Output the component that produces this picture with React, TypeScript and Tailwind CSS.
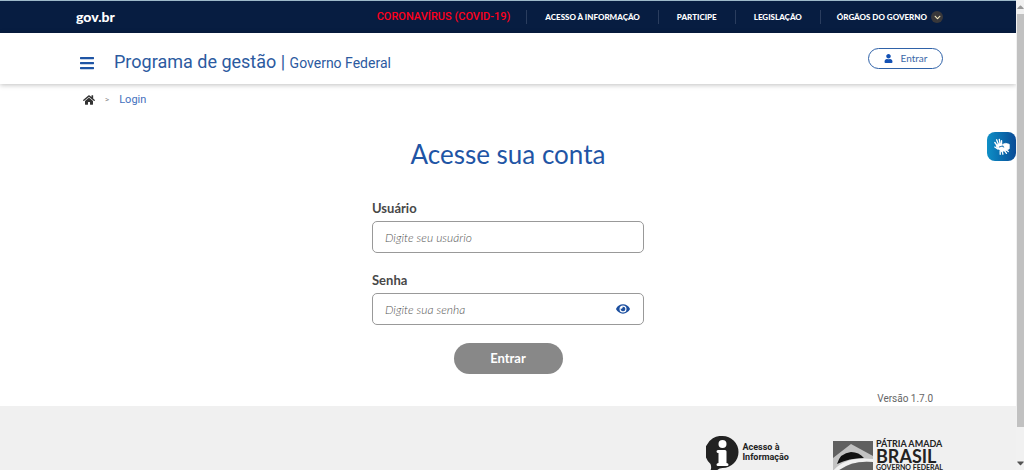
import { useState } from "react";
import {
  FaBars,
  FaCaretDown,
  FaCaretUp,
  FaChevronDown,
  FaEye,
  FaHome,
  FaUser,
} from "react-icons/fa";
import clsx from "clsx";

const NAV_LINKS = ["Acesso à informação", "Participe", "Legislação"];

function GovBar() {
  return (
    <div className="flex h-[33px] shrink-0 items-center justify-between border-t border-[#9db9c9] bg-[#071d41] pr-[73px] pl-[76px] text-white">
      <a href="#" className="text-[14px] leading-4 font-black">
        gov.br
      </a>
      <nav className="flex items-center text-[8px] leading-[14px] font-black uppercase">
        <a
          href="#"
          className="pr-4 font-[Roboto,sans-serif] text-[11px] font-medium text-[#ff001c]"
        >
          Coronavírus (COVID-19)
        </a>
        {NAV_LINKS.map((label) => (
          <a
            key={label}
            href="#"
            className="border-l border-[#2a3d5e] px-[18px]"
          >
            {label}
          </a>
        ))}
        <button
          type="button"
          className="flex items-center gap-1 border-l border-[#2a3d5e] pl-4 uppercase"
        >
          Órgãos do governo
          <span className="flex h-3 w-3 items-center justify-center rounded-full bg-[#39383a]">
            <FaChevronDown className="h-[7px] w-[7px] text-[#f3e9c0]" />
          </span>
        </button>
      </nav>
    </div>
  );
}

function Header() {
  return (
    <header className="relative flex h-[51px] shrink-0 items-center justify-between bg-white pr-[73px] pl-20 shadow-[0_1px_5px_rgba(0,0,0,0.25)]">
      <div className="flex items-center gap-5 pt-2">
        <button type="button" aria-label="Menu" className="text-[#1f55a5]">
          <FaBars className="h-4 w-[14px]" />
        </button>
        <h1 className="font-[Roboto,sans-serif] text-[18px] leading-6 text-[#2c5aa0]">
          Programa de gestão |{" "}
          <span className="text-[14px]">Governo Federal</span>
        </h1>
      </div>
      <button
        type="button"
        className="flex h-[21px] w-[75px] items-center justify-center gap-2 rounded-full border border-[#2f62a8] text-[10px] text-[#3b68a8]"
      >
        <FaUser className="h-[9px] w-[9px] text-[#1351b4]" />
        Entrar
      </button>
    </header>
  );
}

function Breadcrumb() {
  return (
    <nav className="flex h-[31px] shrink-0 items-center gap-[10px] pl-[83px] font-[Roboto,sans-serif] text-[11px] leading-4">
      <a href="#" aria-label="Início" className="text-[#333]">
        <FaHome className="h-3 w-3" />
      </a>
      <span className="text-[8px] text-[#888]">&gt;</span>
      <a href="#" className="text-[#4470bd]">
        Login
      </a>
    </nav>
  );
}

const inputClass =
  "h-8 w-full rounded-[5px] border border-[#999] bg-white px-3 text-[12px] text-[#333] placeholder:font-light placeholder:text-[#555] placeholder:italic focus:outline-none";

function LoginForm() {
  const [showPassword, setShowPassword] = useState(false);

  return (
    <form
      className="mx-auto flex w-[272px] flex-col"
      onSubmit={(e) => e.preventDefault()}
    >
      <h2 className="mt-[23px] self-center text-[26px] leading-8 text-[#1f55a5]">
        Acesse sua conta
      </h2>
      <label
        htmlFor="user"
        className="mt-[30px] mb-[5px] text-[13px] leading-4 font-bold text-[#484848]"
      >
        Usuário
      </label>
      <input
        id="user"
        type="text"
        placeholder="Digite seu usuário"
        className={inputClass}
      />
      <label
        htmlFor="password"
        className="mt-[19px] mb-[5px] text-[13px] leading-4 font-bold text-[#484848]"
      >
        Senha
      </label>
      <div className="relative">
        <input
          id="password"
          type={showPassword ? "text" : "password"}
          placeholder="Digite sua senha"
          className={clsx(inputClass, "pr-10")}
        />
        <button
          type="button"
          aria-label="Mostrar senha"
          onClick={() => setShowPassword(!showPassword)}
          className="absolute inset-y-0 right-[14px] flex items-center text-[#1c4f9f]"
        >
          <FaEye className="h-[14px] w-[14px]" />
        </button>
      </div>
      <button
        type="submit"
        className="mt-[18px] h-[31px] w-[109px] self-center rounded-full bg-[#888] text-[13px] font-bold text-white"
      >
        Entrar
      </button>
    </form>
  );
}

function InfoIcon() {
  return (
    <svg viewBox="0 0 33 38" className="h-[38px] w-[33px] shrink-0">
      <path
        d="M16.500 0a16 16 0 0 1 0 32q-4 0-6 3-3 3-8 2 4-4 2-9A16 16 0 0 1 16.500 0z"
        fill="#222"
      />
      <circle cx="16.500" cy="8" r="4" fill="#fff" />
      <path
        d="M12 14h7q1.500 0 1.500 1.500V27q2 0 2 1.500T21 30h-9q-1.500 0-1.500-1.500T12.500 27V17q-2 0-2-1.500T12 14z"
        fill="#fff"
      />
    </svg>
  );
}

function FlagIcon() {
  return (
    <svg viewBox="0 0 40 30" className="mt-px h-[30px] w-10 shrink-0">
      <path d="M0 0h40v30H0z" fill="#606060" />
      <path d="M0 17L18 3l22 12v15H0z" fill="#c2c2c2" />
      <path d="M4 23q3-11 14-12 8 0 13 6-15 0-27 6z" fill="#111" />
      <path d="M0 30q12-15 40-12v3Q18 19 5 30z" fill="#f0f0f0" />
      <path d="M5 30q14-11 35-9v9z" fill="#606060" />
    </svg>
  );
}

function HandsIcon() {
  return (
    <svg
      viewBox="0 0 20 20"
      className="h-[18px] w-[18px]"
      fill="none"
      stroke="currentColor"
      strokeLinecap="round"
      strokeLinejoin="round"
    >
      <path
        d="M5 9L2 5M6 7L4 2M8 7L7 1.500M9.500 8V3M5 12L2 10M13 12l4 3M12 13l3 4M10 14l1 4M8 14v4"
        strokeWidth="1.500"
      />
      <path d="M4 8l4-2 2 2 1 3-3 2-3-1z" fill="currentColor" />
      <path
        d="M11 7l3-1 4 1v5l-4 2-5 1-1-2 4-3z"
        fill="currentColor"
      />
      <path d="M7 10l3-1 2 1" stroke="#0b66aa" />
    </svg>
  );
}

function Footer() {
  return (
    <footer className="flex flex-1 items-start justify-end gap-11 bg-[#f0f0f0] pt-[30px] pr-[73px]">
      <a href="#" className="flex items-start gap-[3px] text-[#222]">
        <InfoIcon />
        <span className="pt-[6px] font-[Roboto,sans-serif] text-[9px] leading-[10px] font-bold">
          Acesso à
          <br />
          Informação
        </span>
      </a>
      <a href="#" className="flex items-start gap-[3px] pt-1 text-[#222]">
        <FlagIcon />
        <span className="flex flex-col">
          <span className="text-[9px] leading-[8px] font-bold">
            PÁTRIA AMADA
          </span>
          <span className="text-[18px] leading-4 font-bold">BRASIL</span>
          <span className="text-[7px] leading-[6px] font-bold">
            GOVERNO FEDERAL
          </span>
        </span>
      </a>
    </footer>
  );
}

export default function App() {
  return (
    <div className="flex h-screen overflow-hidden bg-white font-[Lato,sans-serif]">
      <div className="relative flex min-w-0 flex-1 flex-col overflow-hidden">
        <GovBar />
        <Header />
        <Breadcrumb />
        <main className="shrink-0">
          <LoginForm />
          <p className="mt-[17px] pr-[83px] text-right font-[Roboto,sans-serif] text-[10px] leading-[15px] text-[#666]">
            Versão 1.7.0
          </p>
        </main>
        <Footer />
        <button
          type="button"
          aria-label="Libras"
          className="absolute top-[132px] right-0 flex h-[29px] w-[29px] items-center justify-center rounded-lg bg-linear-to-r from-[#0f8fc6] to-[#0b4b96] text-white"
        >
          <HandsIcon />
        </button>
      </div>
      {/* Scroll track */}
      <div className="flex w-2 shrink-0 flex-col items-center bg-[#f1f1f1] pl-px text-[#555]">
        <FaCaretUp className="h-[14px] w-[7px] shrink-0 text-[#999]" />
        <div className="h-[413px] w-full bg-[#c1c1c1]" />
        <FaCaretDown className="mt-auto h-[14px] w-[7px] shrink-0" />
      </div>
    </div>
  );
}
